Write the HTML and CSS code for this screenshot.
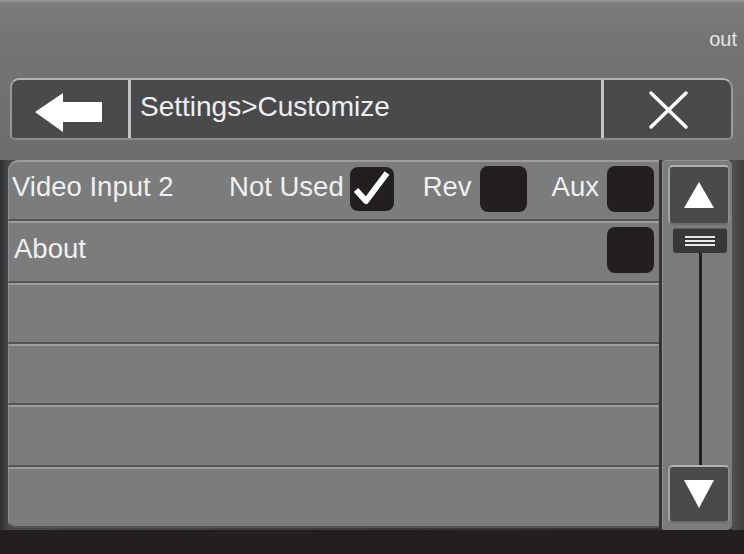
FILE: index.html
```html
<!DOCTYPE html>
<html>
<head>
<meta charset="utf-8">
<link rel="stylesheet" href="styles.css">
</head>
<body>
<div class="screen">
  <div class="top"><span class="out">out</span></div>
  <div class="header">
    <div class="back">
      <svg class="icon" viewBox="0 0 116 58" width="116" height="58"><polygon points="23,32 51,13 51,22 90,22 90,42 51,42 51,52" fill="#fff"/></svg>
    </div>
    <div class="title">Settings&gt;Customize</div>
    <div class="close">
      <svg class="icon" viewBox="0 0 127 58" width="127" height="58"><path d="M47 13 L82 47 M82 13 L47 47" stroke="#fff" stroke-width="3.5" stroke-linecap="round"/></svg>
    </div>
  </div>
  <div class="main">
    <div class="list">
      <div class="row">
        <span class="label">Video Input 2</span>
        <span class="opt first">Not Used</span>
        <span class="box checked"><svg viewBox="0 0 44 44" width="44" height="44"><path d="M6 23 L16 34 L37 6" stroke="#fff" stroke-width="6" fill="none" stroke-linejoin="round"/></svg></span>
        <span class="opt gap">Rev</span>
        <span class="box"></span>
        <span class="opt gap aux">Aux</span>
        <span class="box"></span>
      </div>
      <div class="row">
        <span class="label about">About</span>
        <span class="box push"></span>
      </div>
      <div class="row"></div>
      <div class="row"></div>
      <div class="row"></div>
      <div class="row last"></div>
    </div>
    <div class="scroll">
      <div class="sbtn"><svg viewBox="0 0 30 26" width="30" height="26"><polygon points="15,0 30,26 0,26" fill="#fff"/></svg></div>
      <div class="thumb"><span></span><span></span><span></span></div>
      <div class="track"></div>
      <div class="sbtn down"><svg viewBox="0 0 30 28" width="30" height="28"><polygon points="0,0 30,0 15,28" fill="#fff"/></svg></div>
    </div>
    <div class="edge"></div>
  </div>
  <div class="bottom"></div>
</div>
</body>
</html>
```
FILE: styles.css
```css
html, body {
  margin: 0;
  padding: 0;
}
body {
  width: 744px;
  height: 554px;
  overflow: hidden;
  background: #6e6f71;
  font-family: "Liberation Sans", Arial, sans-serif;
  color: #f0f0f0;
}
.screen {
  display: flex;
  flex-direction: column;
  height: 554px;
  background: linear-gradient(#9a9b9d 0, #7b7c7e 3px, #737476 40px, #6c6d6f 160px, #6a6b6d 100%);
}
.top {
  height: 78px;
  display: flex;
  justify-content: flex-end;
  align-items: flex-start;
  padding-right: 7px;
  box-sizing: border-box;
}
.out {
  font-size: 20px;
  line-height: 1;
  margin-top: 29px;
  color: #e6e6e6;
}
.header {
  height: 62px;
  margin: 0 11px 0 10px;
  display: flex;
  box-sizing: border-box;
  background: #4a4a4c;
  border-top: 2px solid #b2b3b5;
  border-left: 2px solid #97989a;
  border-right: 2px solid #9a9b9d;
  border-bottom: 2px solid #8b8c8e;
  border-radius: 9px 10px 5px 5px;
}
.back {
  width: 116px;
  display: flex;
}
.title {
  flex: 1;
  display: flex;
  align-items: center;
  padding: 0 0 5px 9px;
  border-left: 3px solid #c2c3c5;
  border-right: 3px solid #c2c3c5;
  font-size: 28px;
  line-height: 1;
  color: #efefef;
}
.close {
  width: 127px;
  display: flex;
}
.icon {
  display: block;
}
.main {
  height: 370px;
  margin-top: 20px;
  display: flex;
  align-items: flex-start;
  background: linear-gradient(to right, #303032 0, #47484a 8px, #2f2f31 659px, #3a3a3c 662px);
  padding-left: 8px;
}
.list {
  width: 651px;
  height: 368px;
  display: grid;
  grid-template-rows: repeat(6, 1fr);
}
.row {
  display: flex;
  align-items: center;
  background: #7b7c7e;
  border-top: 2px solid #9c9d9f;
  border-bottom: 2px solid #535456;
  border-left: 1px solid #8e8f91;
  padding: 0 5px 4px 3px;
  font-size: 27.5px;
  line-height: 1;
  color: #f0f0f0;
}
.row:first-child {
  border-top-left-radius: 10px;
}
.row.last {
  border-bottom-left-radius: 8px;
}
.label, .opt {
  margin-bottom: 4px;
}
.label.about {
  margin-left: 2px;
  margin-bottom: 2px;
}
.opt.first {
  margin-left: auto;
  margin-right: 6px;
}
.opt.gap {
  margin-left: 29px;
  margin-right: 8px;
}
.opt.aux {
  margin-left: 25px;
}
.box {
  width: 47px;
  height: 46px;
  border-radius: 8px;
  background: #231f20;
  display: flex;
}
.box.checked {
  width: 44px;
  height: 44px;
}
.box.push {
  margin-left: auto;
}
.scroll {
  width: 70px;
  height: 370px;
  margin-left: 3px;
  box-sizing: border-box;
  background: #7b7c7e;
  border-left: 1px solid #8e8f91;
  border-top: 1px solid #909193;
  border-radius: 3px 5px 5px 3px;
  display: flex;
  flex-direction: column;
  padding: 4px 2px 7px 5px;
}
.sbtn {
  height: 60px;
  box-sizing: border-box;
  background: #4a4a4c;
  border-top: 2px solid #b0b1b3;
  border-left: 2px solid #a2a3a5;
  border-right: 2px solid #8a8b8d;
  border-bottom: 2px solid #6a6b6d;
  border-radius: 5px;
  display: flex;
  align-items: center;
  justify-content: center;
}
.sbtn.down {
  height: 58px;
}
.thumb {
  height: 25px;
  margin: 3px 3px 0 5px;
  box-sizing: border-box;
  background: #38383a;
  border-top: 1px solid #5c5c5e;
  border-radius: 3px;
  display: flex;
  flex-direction: column;
  align-items: center;
  justify-content: center;
  gap: 2px;
}
.thumb span {
  display: block;
  width: 30px;
  height: 2px;
  background: #e8e8e8;
}
.track {
  flex: 1;
  width: 3px;
  margin: 0 auto;
  background: #222223;
  position: relative;
  left: 1px;
}
.edge {
  flex: 1;
  height: 370px;
  background: linear-gradient(to right, #505153, #3c3d3f);
}
.bottom {
  height: 24px;
  background: #231f20;
}
```
